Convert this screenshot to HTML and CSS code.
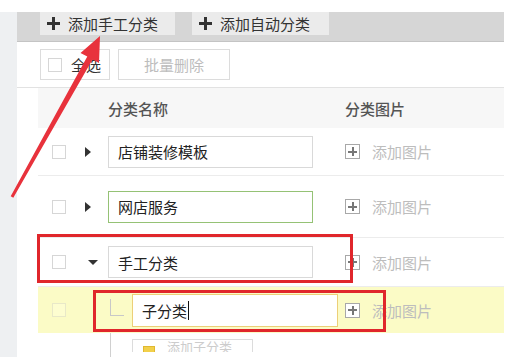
FILE: index.html
```html
<!DOCTYPE html>
<html lang="zh">
<head>
    <meta charset="UTF-8">
    <title>分类管理</title>
    <link rel="stylesheet" href="styles.css">
</head>
<body>
    <div class="page">
        <div class="side"></div>
        <div class="main">
            <div class="tabs">
                <div class="tab tab-manual"><span class="tab-plus"></span>添加手工分类</div>
                <div class="tab tab-auto"><span class="tab-plus"></span>添加自动分类</div>
            </div>

            <div class="toolbar">
                <div class="btn btn-all"><span class="check"></span>全选</div>
                <div class="btn btn-del">批量删除</div>
            </div>

            <div class="grid">
                <div class="head">
                    <span></span>
                    <span class="head-name">分类名称</span>
                    <span>分类图片</span>
                </div>

                <div class="row row-1">
                    <span class="cell-check"><span class="check"></span></span>
                    <span class="cell-toggle"><span class="tri-right"></span></span>
                    <span class="cell-name"><span class="field">店铺装修模板</span></span>
                    <span class="cell-pic"><span class="pic-plus"></span>添加图片</span>
                </div>

                <div class="row row-2">
                    <span class="cell-check"><span class="check"></span></span>
                    <span class="cell-toggle"><span class="tri-right"></span></span>
                    <span class="cell-name"><span class="field field-ok">网店服务</span></span>
                    <span class="cell-pic"><span class="pic-plus"></span>添加图片</span>
                </div>

                <div class="row row-3">
                    <span class="cell-check"><span class="check"></span></span>
                    <span class="cell-toggle"><span class="tri-down"></span></span>
                    <span class="cell-name"><span class="field">手工分类</span></span>
                    <span class="cell-pic"><span class="pic-plus"></span>添加图片</span>
                </div>

                <div class="row row-4">
                    <span class="cell-check"><span class="check check-faint"></span></span>
                    <span class="cell-toggle"></span>
                    <span class="cell-name"><span class="branch"></span><span class="field field-sub">子分类<span class="caret"></span></span></span>
                    <span class="cell-pic"><span class="pic-plus"></span>添加图片</span>
                </div>

                <div class="row row-5">
                    <span class="cell-check"></span>
                    <span class="cell-toggle"></span>
                    <span class="cell-name"><span class="branch-line"></span><span class="btn-sub"><span class="sub-icon"></span>添加子分类</span></span>
                    <span></span>
                </div>
            </div>
        </div>
    </div>

    <svg class="marks" width="514" height="357" viewBox="0 0 514 357">
        <rect x="38.5" y="235.5" width="313" height="46" fill="none" stroke="#e0262b" stroke-width="3"/>
        <rect x="94.5" y="291.5" width="290" height="39" fill="none" stroke="#e0262b" stroke-width="3"/>
        <polygon points="100,36 99,63 92.5,59.5 13.3,197.7 10.7,196.3 87.3,56.6 80.5,53" fill="#e8323c"/>
    </svg>
</body>
</html>
```

FILE: styles.css
```css
body {
    margin: 0;
    background: #ffffff;
    font-family: "Noto Sans CJK SC", "Noto Sans", sans-serif;
    font-size: 15px;
    color: #333;
    position: relative;
}

.page {
    padding-top: 12px;
    display: flex;
    height: 345px;
    overflow: hidden;
}

.side {
    width: 17px;
    background: #eef0f2;
    flex-shrink: 0;
}

.main {
    width: 487px;
}

/* Tabs */
.tabs {
    height: 29px;
    background: #d6d6d6;
    border-bottom: 1px solid #c4c4c4;
    display: flex;
    gap: 17px;
    padding-left: 23px;
}

.tab {
    height: 23px;
    background: #ebebeb;
    display: flex;
    align-items: center;
    padding-left: 7px;
    gap: 8px;
    box-sizing: border-box;
    line-height: 1;
}

.tab-manual { width: 135px; }
.tab-auto { width: 137px; }

.tab-plus {
    width: 13px;
    height: 13px;
    background:
        linear-gradient(#333, #333) center / 13px 3px no-repeat,
        linear-gradient(#333, #333) center / 3px 13px no-repeat;
}

/* Toolbar */
.toolbar {
    height: 38px;
    padding: 7px 0 0 23px;
    display: flex;
    gap: 8px;
    border-bottom: 1px solid #e2e2e2;
}

.btn {
    height: 31px;
    box-sizing: border-box;
    border: 1px solid #dcdcdc;
    background: #fff;
    display: flex;
    align-items: center;
}

.btn-all {
    width: 70px;
    padding-left: 7px;
    gap: 9px;
}

.btn-del {
    width: 112px;
    justify-content: center;
    color: #bdbdbd;
}

.check {
    display: inline-block;
    width: 14px;
    height: 14px;
    box-sizing: border-box;
    border: 1px solid #d6d6d6;
    background: #fff;
}

.check-faint {
    border-color: #e8e8c8;
    background: #fdfdd0;
}

/* Grid */
.grid {
    margin-left: 21px;
}

.head,
.row {
    display: grid;
    grid-template-columns: 38px 32px 237px 1fr;
    align-items: center;
}

.head {
    height: 40px;
    background: #f7f7f7;
    color: #555;
    font-weight: 500;
    grid-template-columns: 70px 237px 1fr;
}

.row {
    border-bottom: 1px solid #ececec;
}

.row-1 { height: 47px; }
.row-2 { height: 61px; }
.row-3 { height: 48px; }
.row-4 { height: 46px; background: #fbfbc6; border-bottom: none; }
.row-5 { height: 24px; border-bottom: none; align-items: end; }

.cell-check {
    padding-left: 14px;
    display: flex;
}

.cell-toggle {
    display: flex;
}

.tri-right {
    margin-left: 9px;
    width: 0;
    height: 0;
    border-top: 5px solid transparent;
    border-bottom: 5px solid transparent;
    border-left: 6px solid #333;
}

.tri-down {
    margin-left: 12px;
    width: 0;
    height: 0;
    border-left: 5px solid transparent;
    border-right: 5px solid transparent;
    border-top: 5px solid #333;
}

.cell-name {
    display: flex;
    align-items: center;
}

.field {
    width: 205px;
    height: 32px;
    box-sizing: border-box;
    border: 1px solid #d9d9d9;
    background: #fff;
    padding-left: 9px;
    display: flex;
    align-items: center;
    color: #222;
}

.field-ok {
    border-color: #95c275;
}

.field-sub {
    width: 206px;
    height: 33px;
    border-color: #eccf78;
}

.caret {
    display: inline-block;
    width: 1px;
    height: 19px;
    background: #111;
    margin-left: 1px;
}

.branch {
    width: 14px;
    height: 17px;
    box-sizing: border-box;
    border-left: 1px solid #c8c8c8;
    border-bottom: 1px solid #c8c8c8;
    margin: 0 8px 6px 2px;
}

.branch-line {
    width: 1px;
    height: 24px;
    background: #d0d0d0;
    margin: 0 21px 0 2px;
}

.btn-sub {
    width: 121px;
    height: 13px;
    box-sizing: border-box;
    border: 1px solid #dcdcdc;
    border-bottom: none;
    display: flex;
    align-items: flex-end;
    padding-left: 10px;
    gap: 12px;
    color: #ccc;
    font-size: 13px;
    line-height: 10px;
    overflow: hidden;
}

.sub-icon {
    width: 10px;
    height: 5px;
    background: #f2d04a;
    border: 1px solid #e0b830;
    border-bottom: none;
}

.cell-pic {
    display: flex;
    align-items: center;
    gap: 12px;
    color: #bdbdbd;
}

.pic-plus {
    width: 15px;
    height: 15px;
    box-sizing: border-box;
    border: 1px solid #a8a8a8;
    background:
        linear-gradient(#777, #777) center / 9px 2px no-repeat,
        linear-gradient(#777, #777) center / 2px 9px no-repeat,
        #fff;
}

/* Annotation overlay */
.marks {
    position: absolute;
    top: 0;
    left: 0;
    pointer-events: none;
}
```
